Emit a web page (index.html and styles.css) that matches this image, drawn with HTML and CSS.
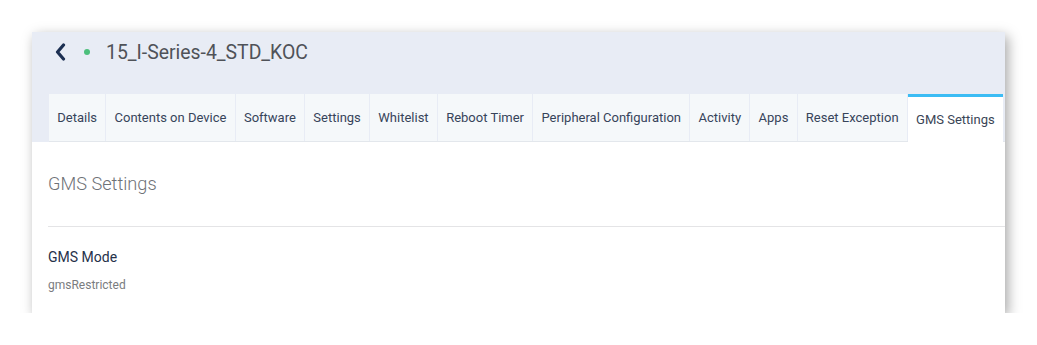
FILE: index.html
```html
<!DOCTYPE html>
<html lang="en">
<head>
<meta charset="UTF-8">
<meta name="viewport" content="width=device-width, initial-scale=1.0">
<title>Device - GMS Settings</title>
<link rel="stylesheet" href="styles.css">
</head>
<body>
<div class="page">
  <div class="card">
    <div class="card-header">
      <div class="title-row">
        <span class="back">
          <svg width="11" height="18" viewBox="0 0 11 18"><path d="M8.5 2 L2.5 9 L8.5 16" fill="none" stroke="#1c2f52" stroke-width="3.2" stroke-linecap="round" stroke-linejoin="round"/></svg>
        </span>
        <span class="status-dot"></span>
        <h1 class="device-name">15_I-Series-4_STD_KOC</h1>
      </div>
      <ul class="tabs">
        <li class="tab">Details</li>
        <li class="tab">Contents on Device</li>
        <li class="tab">Software</li>
        <li class="tab">Settings</li>
        <li class="tab">Whitelist</li>
        <li class="tab">Reboot Timer</li>
        <li class="tab">Peripheral Configuration</li>
        <li class="tab">Activity</li>
        <li class="tab">Apps</li>
        <li class="tab">Reset Exception</li>
        <li class="tab active">GMS Settings</li>
      </ul>
    </div>
    <div class="card-body">
      <h2 class="section-title">GMS Settings</h2>
      <div class="field">
        <div class="field-label">GMS Mode</div>
        <div class="field-value">gmsRestricted</div>
      </div>
    </div>
  </div>
</div>
</body>
</html>
```

FILE: styles.css
```css
html, body {
  margin: 0;
  padding: 0;
  background-color: white;
  font-family: Roboto, 'Noto Sans', sans-serif;
}

.page {
  padding: 32px 0 0 32px;
}

.card {
  width: 973px;
  height: 281px;
  background-color: white;
  box-shadow: 3px 4px 12px rgba(0, 0, 0, 0.35);
  overflow: hidden;
}

.card-header {
  background-color: #e8ecf5;
  padding-left: 17px;
}

.title-row {
  display: flex;
  align-items: center;
  height: 40px;
  padding-left: 6px;
}

.back {
  display: flex;
  width: 11px;
  height: 18px;
}

.status-dot {
  width: 6px;
  height: 6px;
  border-radius: 50%;
  background-color: #4cbf7c;
  margin-left: 18px;
}

.device-name {
  margin: 0 0 0 16px;
  font-size: 19.4px;
  font-weight: 400;
  color: #4f5258;
}

.tabs {
  display: flex;
  gap: 1px;
  list-style: none;
  margin: 22px 0 0 0;
  padding: 0;
  height: 47px;
  border-bottom: 1px solid #e3e7ec;
}

.tab {
  display: flex;
  align-items: center;
  padding: 0 8.25px;
  background-color: #f5f8fa;
  color: #37445a;
  font-size: 13px;
  white-space: nowrap;
}

.tab.active {
  background-color: white;
  color: #3a4556;
  border-top: 3px solid #3cbcf4;
  margin-bottom: -1px;
}

.card-body {
  padding: 31px 0 0 16px;
}

.section-title {
  margin: 0;
  font-size: 18.2px;
  font-weight: 300;
  color: #6f7277;
  padding-bottom: 32px;
  border-bottom: 1px solid #e4e4e6;
}

.field {
  padding-top: 22px;
}

.field-label {
  font-size: 14px;
  color: #26314a;
}

.field-value {
  margin-top: 13px;
  font-size: 12px;
  color: #7a7c80;
}
```
